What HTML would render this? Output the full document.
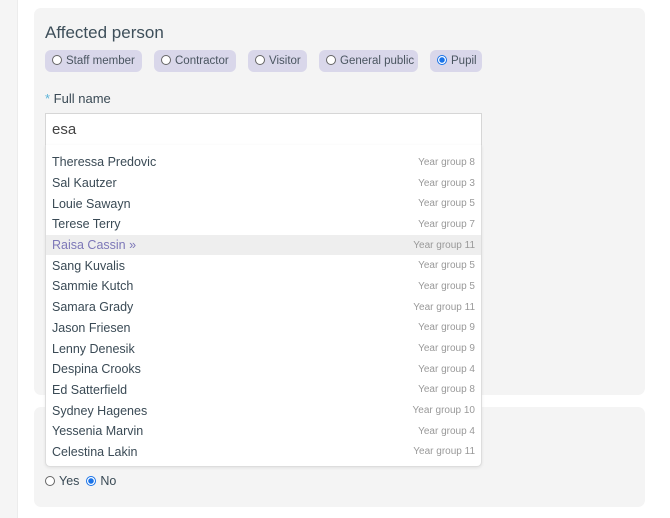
<!DOCTYPE html>
<html><head><style>
*{box-sizing:border-box;margin:0;padding:0}
body{width:670px;height:518px;background:#fff;font-family:"Liberation Sans",sans-serif;position:relative;overflow:hidden;color:#3a4a55}
.strip{position:absolute;left:0;top:0;width:18px;height:518px;background:#f5f5f5;border-right:1px solid #ececec}
.card{position:absolute;left:34px;width:611px;background:#f4f4f4;border-radius:7px}
h2{position:absolute;left:45px;top:23px;font-weight:normal;font-size:17px;color:#3e4f5a}
.pill{position:absolute;top:50px;height:22px;background:#d9d7ea;border-radius:6px;font-size:11.5px;line-height:22px;padding-left:7px;color:#4a5560;white-space:nowrap}
.r{display:inline-block;width:10px;height:10px;border:1px solid #666;border-radius:50%;background:#fff;margin-right:4px;vertical-align:-1px}
.r.on{border-color:#1a73e8;background:radial-gradient(circle,#1a73e8 2.5px,#fff 3px)}
.lbl{position:absolute;left:45px;top:91px;font-size:13px}
.lbl span{color:#5bb3d8}
.inp{position:absolute;left:45px;top:113px;width:437px;height:33px;background:#fff;border:1px solid #d6d6d6;font-size:15px;padding:7px 6px;color:#444}
.dd{position:absolute;left:45px;top:145px;width:437px;height:322px;background:#fff;border:1px solid #ddd;border-top:none;border-radius:0 0 5px 5px;box-shadow:0 1px 3px rgba(0,0,0,.08);padding-top:7px}
.row{height:20.7px;display:flex;justify-content:space-between;align-items:center;padding:0 6px;font-size:12.5px;color:#3a4a55}
.row b{font-weight:normal}
.row small{font-size:10px;color:#999}
.row.hl{background:#eeeeee}
.row.hl b{color:#7d78b8}
.yn{position:absolute;left:45px;top:474px;font-size:12.5px}
</style></head><body>
<div class="strip"></div>
<div class="card" style="top:8px;height:387px"></div>
<div class="card" style="top:407px;height:100px"></div>
<h2>Affected person</h2>
<div class="pill" style="left:45px;width:97px"><i class="r"></i>Staff member</div>
<div class="pill" style="left:154px;width:82px"><i class="r"></i>Contractor</div>
<div class="pill" style="left:248px;width:59px"><i class="r"></i>Visitor</div>
<div class="pill" style="left:319px;width:99px"><i class="r"></i>General public</div>
<div class="pill" style="left:430px;width:52px"><i class="r on"></i>Pupil</div>
<div class="lbl"><span>*</span> Full name</div>
<div class="inp">esa</div>
<div class="dd">
<div class="row"><b>Theressa Predovic</b><small>Year group 8</small></div>
<div class="row"><b>Sal Kautzer</b><small>Year group 3</small></div>
<div class="row"><b>Louie Sawayn</b><small>Year group 5</small></div>
<div class="row"><b>Terese Terry</b><small>Year group 7</small></div>
<div class="row hl"><b>Raisa Cassin »</b><small>Year group 11</small></div>
<div class="row"><b>Sang Kuvalis</b><small>Year group 5</small></div>
<div class="row"><b>Sammie Kutch</b><small>Year group 5</small></div>
<div class="row"><b>Samara Grady</b><small>Year group 11</small></div>
<div class="row"><b>Jason Friesen</b><small>Year group 9</small></div>
<div class="row"><b>Lenny Denesik</b><small>Year group 9</small></div>
<div class="row"><b>Despina Crooks</b><small>Year group 4</small></div>
<div class="row"><b>Ed Satterfield</b><small>Year group 8</small></div>
<div class="row"><b>Sydney Hagenes</b><small>Year group 10</small></div>
<div class="row"><b>Yessenia Marvin</b><small>Year group 4</small></div>
<div class="row"><b>Celestina Lakin</b><small>Year group 11</small></div>
</div>
<div class="yn"><i class="r"></i>Yes &nbsp;<i class="r on"></i>No</div>
</body></html>
